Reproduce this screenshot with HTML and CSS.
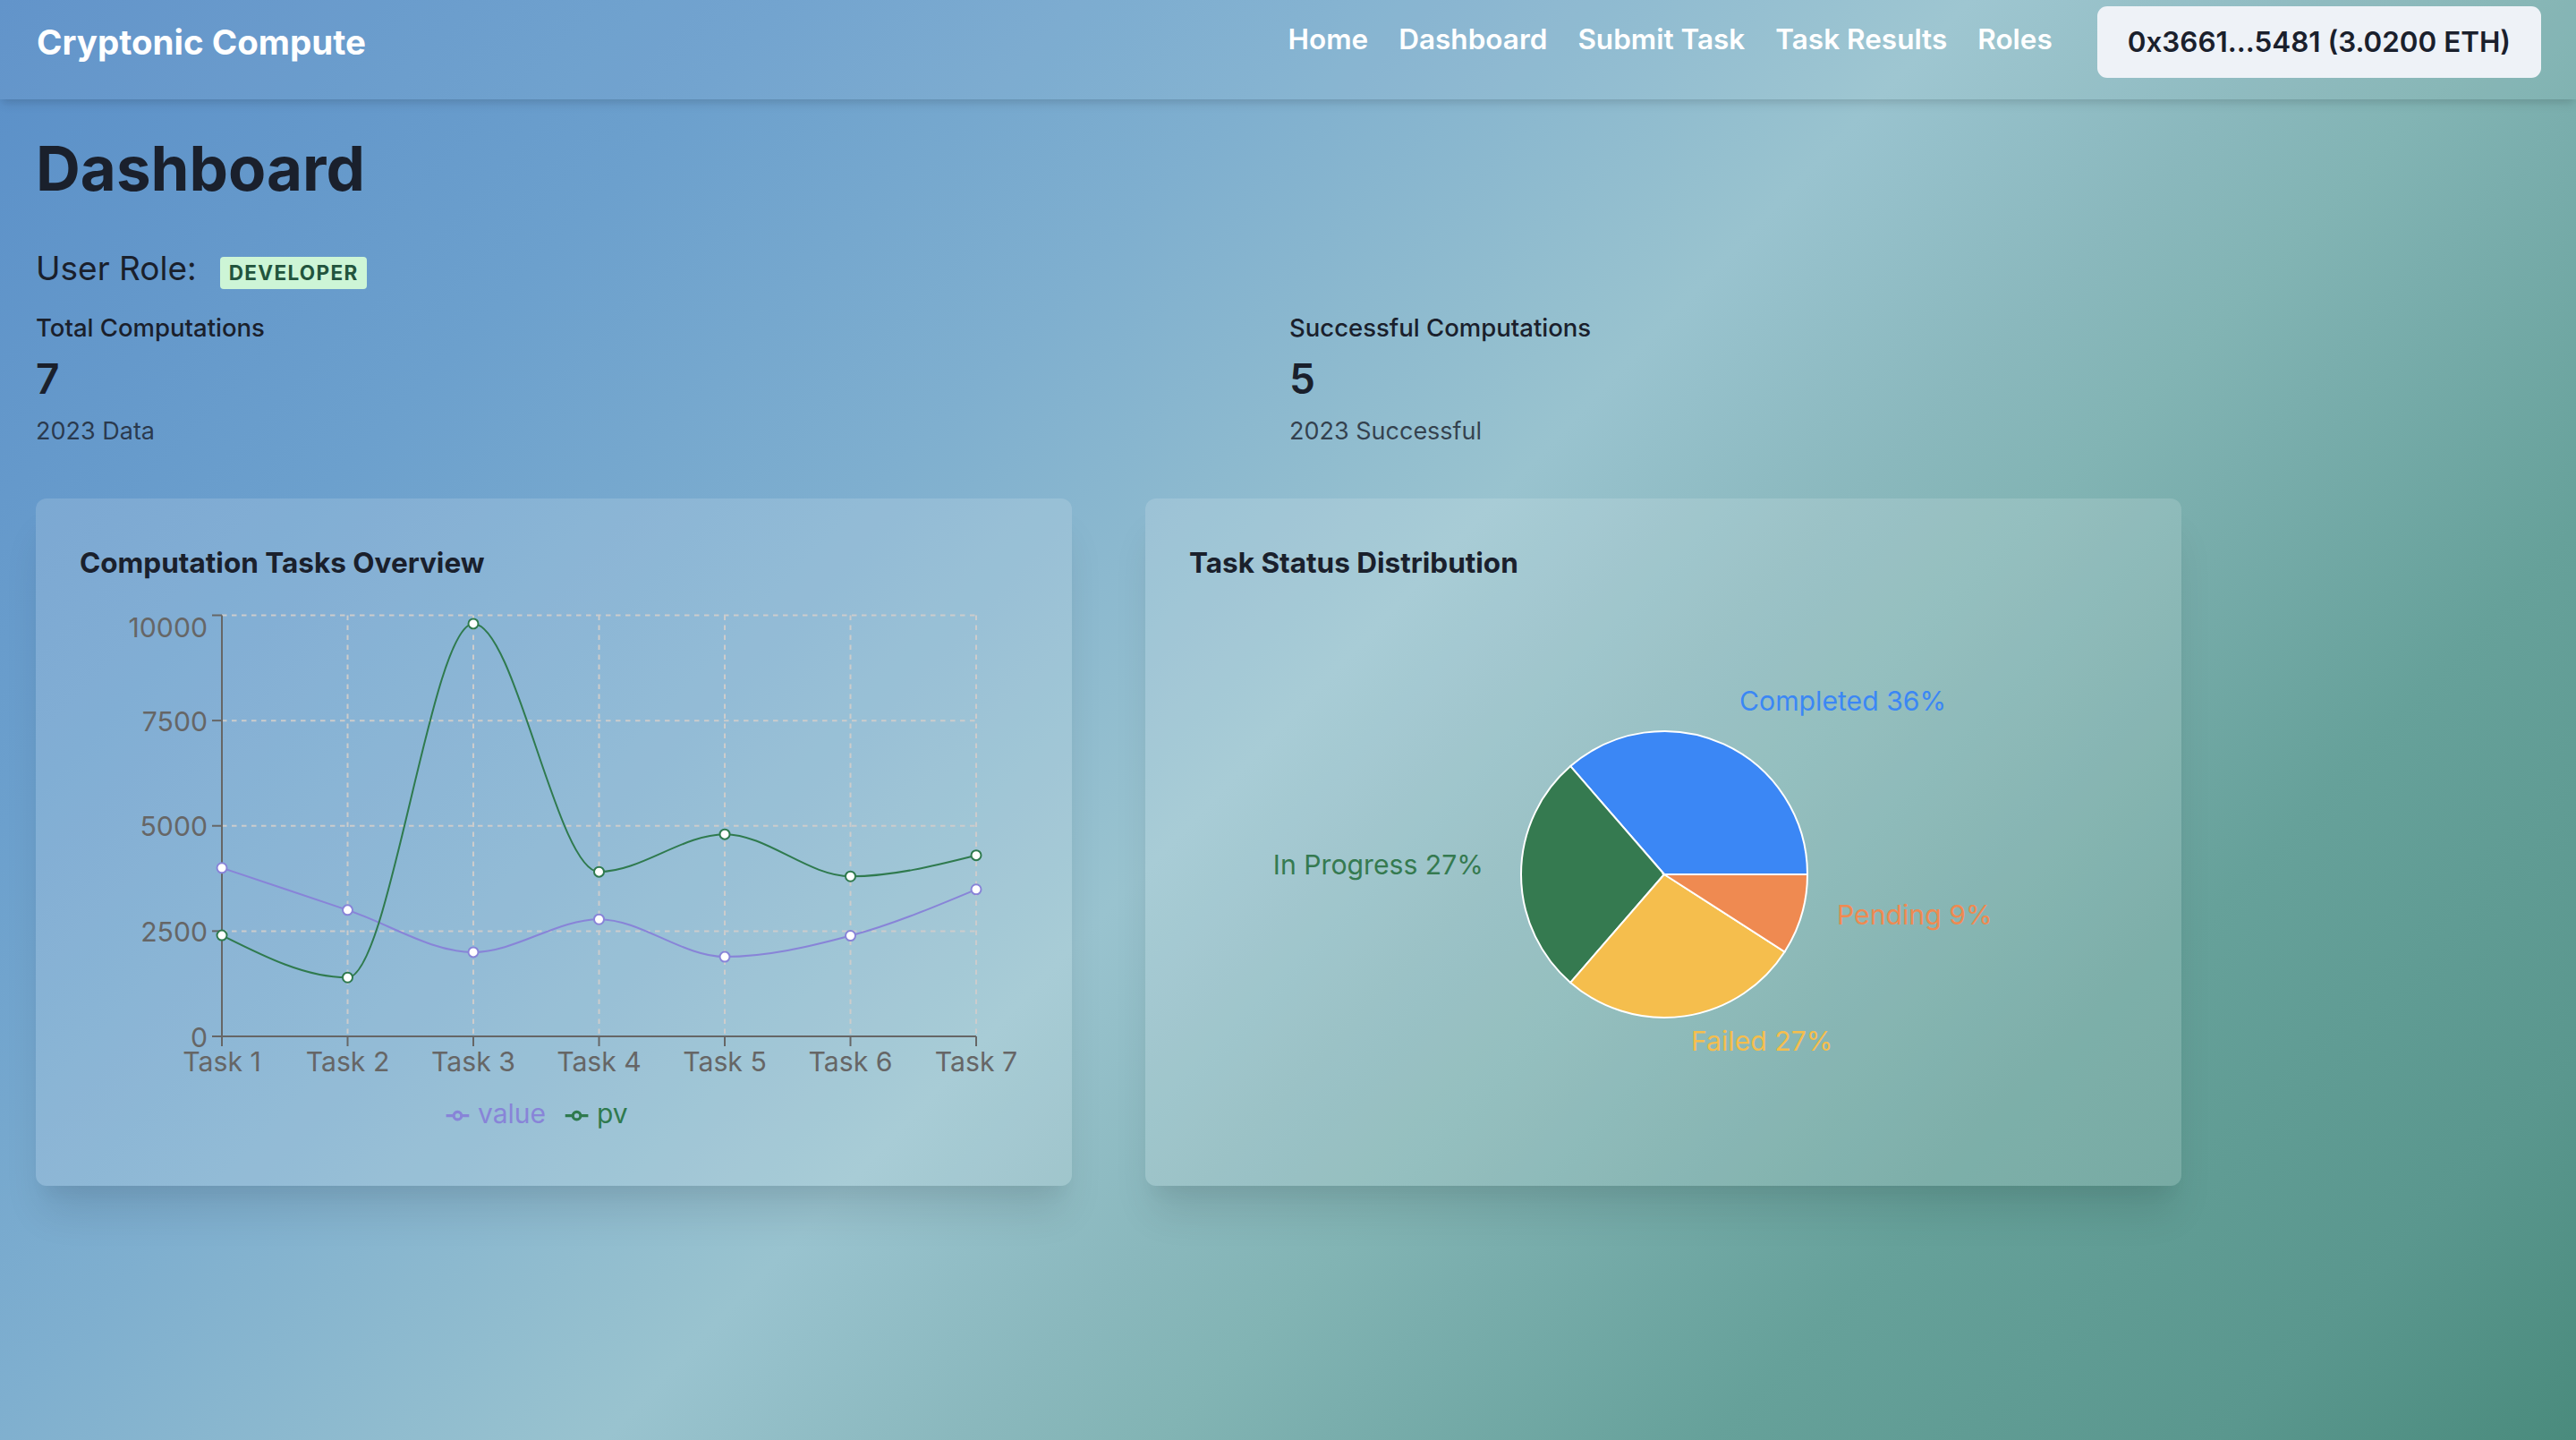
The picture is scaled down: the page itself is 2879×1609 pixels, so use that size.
FILE: index.html
```html
<!DOCTYPE html>
<html lang="en">
<head>
<meta charset="utf-8">
<title>Cryptonic Compute</title>
<link rel="stylesheet" href="styles.css">
</head>
<body>
<nav class="navbar">
  <div class="brand">Cryptonic Compute</div>
  <div class="nav-right">
    <ul class="nav-links">
      <li><a href="#">Home</a></li>
      <li><a href="#">Dashboard</a></li>
      <li><a href="#">Submit Task</a></li>
      <li><a href="#">Task Results</a></li>
      <li><a href="#">Roles</a></li>
    </ul>
    <button class="wallet">0x3661...5481 (3.0200 ETH)</button>
  </div>
</nav>
<main class="main">
  <h1 class="page-title">Dashboard</h1>
  <div class="role-row">
    <span class="role-label">User Role:</span>
    <span class="badge">Developer</span>
  </div>
  <div class="stats">
    <div class="stat">
      <div class="stat-label">Total Computations</div>
      <div class="stat-number">7</div>
      <div class="stat-help">2023 Data</div>
    </div>
    <div class="stat">
      <div class="stat-label">Successful Computations</div>
      <div class="stat-number">5</div>
      <div class="stat-help">2023 Successful</div>
    </div>
  </div>
  <div class="charts">
    <section class="card">
      <h2 class="card-title">Computation Tasks Overview</h2>
      <svg class="chart" viewBox="0 0 1060 596" width="1060" height="596">
        <g class="grid">
          <line x1="159" y1="7.5" x2="1002" y2="7.5"/>
          <line x1="159" y1="125.125" x2="1002" y2="125.125"/>
          <line x1="159" y1="242.75" x2="1002" y2="242.75"/>
          <line x1="159" y1="360.375" x2="1002" y2="360.375"/>
          <line x1="159" y1="478" x2="1002" y2="478"/>
          <line x1="159" y1="7.5" x2="159" y2="478"/>
          <line x1="299.5" y1="7.5" x2="299.5" y2="478"/>
          <line x1="440" y1="7.5" x2="440" y2="478"/>
          <line x1="580.5" y1="7.5" x2="580.5" y2="478"/>
          <line x1="721" y1="7.5" x2="721" y2="478"/>
          <line x1="861.5" y1="7.5" x2="861.5" y2="478"/>
          <line x1="1002" y1="7.5" x2="1002" y2="478"/>
        </g>
        <g class="axis">
          <line x1="159" y1="7.5" x2="159" y2="478"/>
          <line x1="148" y1="7.5" x2="159" y2="7.5"/>
          <line x1="148" y1="125.125" x2="159" y2="125.125"/>
          <line x1="148" y1="242.75" x2="159" y2="242.75"/>
          <line x1="148" y1="360.375" x2="159" y2="360.375"/>
          <line x1="148" y1="478" x2="159" y2="478"/>
          <line x1="159" y1="478" x2="1002" y2="478"/>
          <line x1="159" y1="478" x2="159" y2="489"/>
          <line x1="299.5" y1="478" x2="299.5" y2="489"/>
          <line x1="440" y1="478" x2="440" y2="489"/>
          <line x1="580.5" y1="478" x2="580.5" y2="489"/>
          <line x1="721" y1="478" x2="721" y2="489"/>
          <line x1="861.5" y1="478" x2="861.5" y2="489"/>
          <line x1="1002" y1="478" x2="1002" y2="489"/>
        </g>
        <g class="tick tick-y">
          <text x="143" y="31.5">10000</text>
          <text x="143" y="136.5">7500</text>
          <text x="143" y="254">5000</text>
          <text x="143" y="371.5">2500</text>
          <text x="143" y="489.5">0</text>
        </g>
        <g class="tick tick-x">
          <text x="159" y="517">Task 1</text>
          <text x="299.5" y="517">Task 2</text>
          <text x="440" y="517">Task 3</text>
          <text x="580.5" y="517">Task 4</text>
          <text x="721" y="517">Task 5</text>
          <text x="861.5" y="517">Task 6</text>
          <text x="1002" y="517">Task 7</text>
        </g>
        <path class="curve curve-value" d="M159,289.8C205.83,305.48,252.67,321.17,299.5,336.85C346.33,352.53,393.17,383.9,440,383.9C486.83,383.9,533.67,347.2,580.5,347.2C627.33,347.2,674.17,389.08,721,389.08C767.83,389.08,814.67,378.1,861.5,365.55C908.33,353,955.17,333.4,1002,313.8"/>
        <path class="curve curve-pv" d="M159,365.08C205.83,388.65,252.67,412.22,299.5,412.22C346.33,412.22,393.17,16.91,440,16.91C486.83,16.91,533.67,294.13,580.5,294.13C627.33,294.13,674.17,252.16,721,252.16C767.83,252.16,814.67,299.21,861.5,299.21C908.33,299.21,955.17,287.45,1002,275.685"/>
        <g class="dots dots-value">
          <circle cx="159" cy="289.8" r="5.5"/>
          <circle cx="299.5" cy="336.85" r="5.5"/>
          <circle cx="440" cy="383.9" r="5.5"/>
          <circle cx="580.5" cy="347.2" r="5.5"/>
          <circle cx="721" cy="389.08" r="5.5"/>
          <circle cx="861.5" cy="365.55" r="5.5"/>
          <circle cx="1002" cy="313.8" r="5.5"/>
        </g>
        <g class="dots dots-pv">
          <circle cx="159" cy="365.08" r="5.5"/>
          <circle cx="299.5" cy="412.22" r="5.5"/>
          <circle cx="440" cy="16.91" r="5.5"/>
          <circle cx="580.5" cy="294.13" r="5.5"/>
          <circle cx="721" cy="252.16" r="5.5"/>
          <circle cx="861.5" cy="299.21" r="5.5"/>
          <circle cx="1002" cy="275.685" r="5.5"/>
        </g>
        <g class="legend">
          <g transform="translate(409.6,553.8) scale(0.803)">
            <path class="legend-icon icon-value" d="M0,16h10.667A5.333,5.333,0,1,1,21.333,16H32M21.333,16A5.333,5.333,0,1,1,10.667,16"/>
          </g>
          <text class="legend-text text-value" x="445" y="574.5">value</text>
          <g transform="translate(542.7,553.8) scale(0.803)">
            <path class="legend-icon icon-pv" d="M0,16h10.667A5.333,5.333,0,1,1,21.333,16H32M21.333,16A5.333,5.333,0,1,1,10.667,16"/>
          </g>
          <text class="legend-text text-pv" x="578" y="574.5">pv</text>
        </g>
      </svg>
    </section>
    <section class="card">
      <h2 class="card-title">Task Status Distribution</h2>
      <svg class="chart" viewBox="0 0 1060 596" width="1060" height="596">
        <g class="slices">
          <path class="slice-completed" d="M531,297L691,297A160,160,0,0,0,426.2,176.1Z"/>
          <path class="slice-progress" d="M531,297L426.2,176.1A160,160,0,0,0,426.2,417.9Z"/>
          <path class="slice-failed" d="M531,297L426.2,417.9A160,160,0,0,0,665.6,383.5Z"/>
          <path class="slice-pending" d="M531,297L665.6,383.5A160,160,0,0,0,691,297Z"/>
        </g>
        <g class="pie-labels">
          <text class="lbl-completed" x="615" y="114">Completed 36%</text>
          <text class="lbl-progress" x="329" y="297" text-anchor="end">In Progress 27%</text>
          <text class="lbl-pending" x="724" y="353">Pending 9%</text>
          <text class="lbl-failed" x="561" y="494">Failed 27%</text>
        </g>
      </svg>
    </section>
  </div>
</main>
</body>
</html>
```

FILE: styles.css
```css
* {
  box-sizing: border-box;
}

html,
body {
  margin: 0;
  padding: 0;
}

body {
  min-height: 100vh;
  font-family: Inter, "Noto Sans", "Liberation Sans", sans-serif;
  color: #1a202c;
  background: linear-gradient(133.5deg,
    #5a8fc8 0%,
    #6599cb 12%,
    #6ca0cd 20%,
    #7fafcf 34%,
    #99c3cf 50%,
    #8ab8bd 59%,
    #82b4b4 64%,
    #7aaead 68%,
    #66a19a 78%,
    #5a978e 91%,
    #4a8b7d 100%);
}

/* ---------- navbar ---------- */
.navbar {
  display: flex;
  align-items: center;
  justify-content: space-between;
  height: 111px;
  padding: 7px 39px 24px 41px;
  background: rgba(255, 255, 255, 0.05);
  box-shadow: 0 7px 11px -2px rgba(0, 0, 0, 0.1), 0 4px 7px -2px rgba(0, 0, 0, 0.06);
}

.brand {
  font-size: 38.5px;
  line-height: 47px;
  font-weight: 700;
  color: #ffffff;
}

.nav-right {
  display: flex;
  align-items: center;
}

.nav-links {
  display: flex;
  gap: 34px;
  list-style: none;
  margin: 0 50px 7px 0;
  padding: 0;
}

.nav-links a {
  color: #ffffff;
  text-decoration: none;
  font-size: 31.5px;
  line-height: 40px;
  font-weight: 600;
}

.wallet {
  height: 80px;
  padding: 0 34px;
  border: 0;
  border-radius: 11px;
  background: #eef2f7;
  color: #1a202c;
  font-family: Inter, "Noto Sans", "Liberation Sans", sans-serif;
  font-size: 31.4px;
  font-weight: 600;
}

/* ---------- main ---------- */
.main {
  padding: 37px 40px 0;
}

.page-title {
  margin: 0;
  font-size: 69px;
  line-height: 80px;
  font-weight: 700;
}

.role-row {
  display: flex;
  align-items: baseline;
  gap: 26px;
  margin-top: 46px;
  height: 51px;
}

.role-label {
  font-size: 37px;
  line-height: 51px;
  font-weight: 400;
}

.badge {
  font-size: 22.5px;
  line-height: 36px;
  font-weight: 700;
  letter-spacing: 0.06em;
  text-transform: uppercase;
  padding: 0 9px 0 10px;
  border-radius: 4px;
  background: #cdf5d6;
  color: #22543d;
}

.stats {
  display: grid;
  grid-template-columns: 1fr 1fr;
  column-gap: 3px;
  margin-top: 21px;
}

.stat-label {
  font-size: 27.5px;
  line-height: 40px;
  font-weight: 500;
}

.stat-number {
  margin-top: 10px;
  font-size: 46px;
  line-height: 55px;
  font-weight: 600;
}

.stat-help {
  margin-top: 11px;
  font-size: 27px;
  line-height: 39px;
  color: rgba(26, 32, 44, 0.8);
}

/* ---------- charts ---------- */
.charts {
  display: grid;
  grid-template-columns: 1158px 1158px;
  column-gap: 82px;
  margin-top: 56px;
}

.card {
  padding: 49px;
  border-radius: 12px;
  background: rgba(255, 255, 255, 0.15);
  box-shadow: 0 37px 46px -9px rgba(0, 0, 0, 0.1), 0 18px 18px -9px rgba(0, 0, 0, 0.04);
}

.card-title {
  margin: 0 0 28px;
  font-size: 31.5px;
  line-height: 46px;
  font-weight: 700;
}

.chart {
  display: block;
  width: 1060px;
  height: 596px;
  overflow: visible;
}

.grid line {
  stroke: #cccccc;
  stroke-width: 2;
  stroke-dasharray: 5.5 5.5;
}

.axis line {
  stroke: #666666;
  stroke-width: 2;
}

.tick text {
  font-family: Inter, "Noto Sans", "Liberation Sans", sans-serif;
  font-size: 30.2px;
  fill: #666666;
}

.tick-y text {
  text-anchor: end;
}

.tick-x text {
  text-anchor: middle;
}

.curve {
  fill: none;
  stroke-width: 2;
}

.curve-value {
  stroke: #8884d8;
}

.curve-pv {
  stroke: #2f7a4e;
}

.dots circle {
  fill: #ffffff;
  stroke-width: 2;
}

.dots-value circle {
  stroke: #8884d8;
}

.dots-pv circle {
  stroke: #2f7a4e;
}

.legend-icon {
  fill: none;
  stroke-width: 4;
}

.icon-value {
  stroke: #8884d8;
}

.icon-pv {
  stroke: #2f7a4e;
}

.legend-text {
  font-family: Inter, "Noto Sans", "Liberation Sans", sans-serif;
  font-size: 30px;
}

.text-value {
  fill: #8884d8;
}

.text-pv {
  fill: #2f7a4e;
}

.slices path {
  stroke: #ffffff;
  stroke-width: 2;
}

.slice-completed { fill: #3b87f5; }
.slice-progress { fill: #357a50; }
.slice-failed { fill: #f5be4d; }
.slice-pending { fill: #ef8a51; }

.pie-labels text {
  font-family: Inter, "Noto Sans", "Liberation Sans", sans-serif;
  font-size: 30.2px;
}

.lbl-completed { fill: #3b87f5; }
.lbl-progress { fill: #357a50; }
.lbl-failed { fill: #f5be4d; }
.lbl-pending { fill: #ef8a51; }
```
